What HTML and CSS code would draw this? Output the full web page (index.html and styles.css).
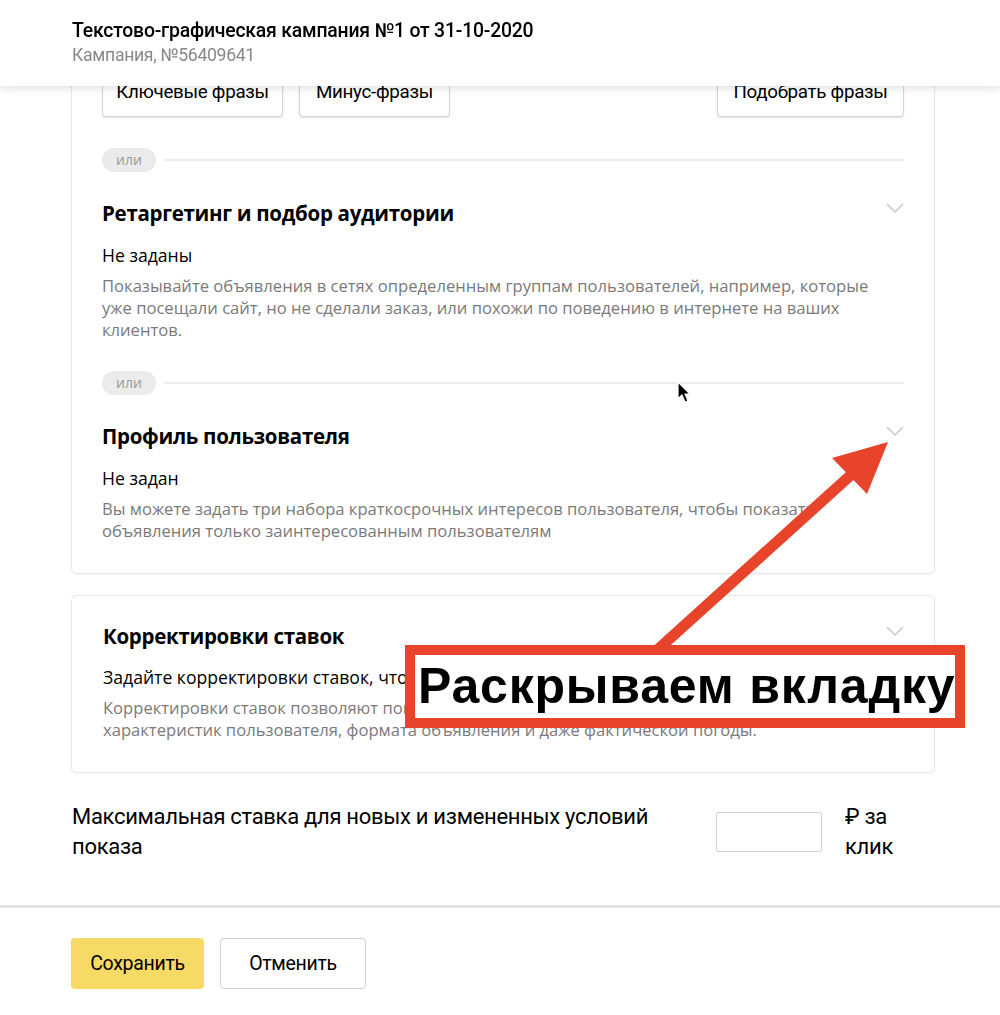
FILE: index.html
```html
<!DOCTYPE html>
<html lang="ru">
<head>
<meta charset="utf-8">
<title>Кампания</title>
<link rel="stylesheet" href="styles.css">
</head>
<body>
<header class="topbar">
  <div class="topbar-title">Текстово-графическая кампания №1 от 31-10-2020</div>
  <div class="topbar-sub">Кампания, №56409641</div>
</header>

<main class="page">
  <section class="card card-first">
    <div class="btn-row">
      <button class="btn">Ключевые фразы</button>
      <button class="btn">Минус-фразы</button>
      <span class="spacer"></span>
      <button class="btn">Подобрать фразы</button>
    </div>

    <div class="or-row"><span class="or-pill">или</span><span class="or-line"></span></div>

    <div class="sec-head">
      <h2 class="sec-title">Ретаргетинг и подбор аудитории</h2>
      <svg class="chev" width="18" height="10" viewBox="0 0 18 10"><path d="M1 1 L9 9 L17 1" fill="none" stroke="#c9c9c9" stroke-width="1.5"/></svg>
    </div>
    <div class="sec-value">Не заданы</div>
    <p class="sec-desc narrow">Показывайте объявления в сетях определенным группам пользователей, например, которые уже посещали сайт, но не сделали заказ, или похожи по поведению в интернете на ваших клиентов.</p>

    <div class="or-row"><span class="or-pill">или</span><span class="or-line"></span></div>

    <div class="sec-head">
      <h2 class="sec-title">Профиль пользователя</h2>
      <svg class="chev" width="18" height="10" viewBox="0 0 18 10"><path d="M1 1 L9 9 L17 1" fill="none" stroke="#c9c9c9" stroke-width="1.5"/></svg>
    </div>
    <div class="sec-value">Не задан</div>
    <p class="sec-desc">Вы можете задать три набора краткосрочных интересов пользователя, чтобы показать объявления только заинтересованным пользователям</p>
  </section>

  <section class="card card-second">
    <div class="sec-head">
      <h2 class="sec-title">Корректировки ставок</h2>
      <svg class="chev" width="18" height="10" viewBox="0 0 18 10"><path d="M1 1 L9 9 L17 1" fill="none" stroke="#c9c9c9" stroke-width="1.5"/></svg>
    </div>
    <div class="sec-value tight">Задайте корректировки ставок, чтобы повысить эффективность рекламы</div>
    <p class="sec-desc">Корректировки ставок позволяют повышать или понижать ставки в зависимости от<br>характеристик пользователя, формата объявления и даже фактической погоды.</p>
  </section>

  <div class="bid-row">
    <div class="bid-label">Максимальная ставка для новых и измененных условий показа</div>
    <input class="bid-input" type="text">
    <div class="bid-unit">₽ за клик</div>
  </div>
</main>

<footer class="footer">
  <button class="btn-save">Сохранить</button>
  <button class="btn-cancel">Отменить</button>
</footer>

<svg class="anno-arrow" width="1000" height="1015" viewBox="0 0 1000 1015">
  <line x1="655" y1="652" x2="852" y2="474" stroke="#e8432b" stroke-width="11"/>
  <polygon points="888,442 832,458 867,494" fill="#e8432b"/>
</svg>
<div class="anno-box">Раскрываем вкладку</div>

<svg class="cursor" width="16" height="24" viewBox="0 0 16 24">
  <path d="M1 1 L1 18 L5 14 L8 21 L11 20 L8 13 L13 13 Z" fill="#000" stroke="#fff" stroke-width="1.2" stroke-linejoin="round"/>
</svg>
</body>
</html>
```

FILE: styles.css
```css
* { box-sizing: border-box; }
html, body { margin: 0; padding: 0; background: #fff; }
body {
  font-family: "Open Sans", "Noto Sans", sans-serif;
  color: #000;
  width: 1000px;
  height: 1015px;
  overflow: hidden;
  position: relative;
}

.topbar {
  position: fixed;
  top: 0; left: 0; right: 0;
  height: 86px;
  background: #fff;
  box-shadow: 0 2px 8px rgba(0,0,0,0.13);
  padding: 19px 0 0 72px;
  z-index: 5;
  font-family: Roboto, "Liberation Sans", sans-serif;
}
.topbar-title {
  font-size: 19.4px;
  font-weight: 500;
  line-height: 24px;
  letter-spacing: -0.2px;
}
.topbar-sub {
  font-size: 17.6px;
  line-height: 22px;
  color: #888;
  margin-top: 1px;
  letter-spacing: -0.3px;
}

.page {
  padding: 39px 65px 0 71px;
}

.card {
  border: 1px solid #e6e6e6;
  border-radius: 6px;
  box-shadow: 0 1px 2px rgba(0,0,0,0.04);
  padding: 0 30px;
  background: #fff;
}
.card-first { padding-top: 27px; padding-bottom: 31px; }
.card-second { margin-top: 21px; padding-top: 27px; padding-bottom: 31px; padding-left: 31px; }

.btn-row { display: flex; gap: 16px; }
.spacer { flex: 1; }
.btn {
  height: 50px;
  padding: 0 10px;
  border: 1px solid #d5d5d5;
  border-radius: 4px;
  background: #fff;
  box-shadow: 0 1px 2px rgba(0,0,0,0.12);
  font-family: Roboto, "Liberation Sans", sans-serif;
  font-size: 18.8px;
  color: #000;
  letter-spacing: -0.3px;
}
.btn:nth-child(1) { width: 181px; }
.btn:nth-child(2) { width: 151px; }
.btn:nth-child(4) { width: 187px; }

.or-row {
  display: flex;
  align-items: center;
  gap: 8px;
  margin-top: 31px;
}
.card-first .or-row + .sec-head { margin-top: 28px; }
.or-pill {
  background: #ebebeb;
  color: #999;
  font-size: 14px;
  line-height: 24px;
  height: 24px;
  padding: 0 14px;
  border-radius: 12px;
}
.or-line { flex: 1; height: 2px; background: #ececec; }
.sec-desc + .or-row { margin-top: 30px; }

.sec-head {
  display: flex;
  justify-content: space-between;
  align-items: flex-start;
}
.sec-title {
  margin: 0;
  font-size: 20.5px;
  font-weight: 700;
  line-height: 26px;
  letter-spacing: -0.3px;
}
.chev { margin-top: 3px; }

.sec-value {
  margin-top: 18px;
  font-size: 17.6px;
  line-height: 22px;
}
.sec-value.tight { margin-top: 17px; }
.sec-desc {
  margin: 9px 0 0;
  font-size: 16.6px;
  line-height: 22px;
  color: #7a7a7a;
}
.sec-desc.narrow { padding-right: 24px; }

.bid-row {
  display: flex;
  align-items: flex-start;
  margin-top: 29px;
  margin-left: 1px;
  font-family: Roboto, "Liberation Sans", sans-serif;
  font-size: 22px;
  line-height: 30px;
  letter-spacing: -0.3px;
}
.bid-label { width: 600px; }
.bid-input {
  margin-left: 44px;
  margin-top: 10px;
  width: 106px;
  height: 40px;
  border: 1px solid #cfcfcf;
  border-radius: 2px;
}
.bid-unit { margin-left: 23px; width: 50px; }

.footer {
  position: absolute;
  left: 0; right: 0;
  top: 905px;
  border-top: 3px solid #e3e3e3;
  padding: 30px 0 0 71px;
  display: flex;
  gap: 16px;
}
.btn-save, .btn-cancel {
  height: 51px;
  border-radius: 4px;
  font-family: Roboto, "Liberation Sans", sans-serif;
  font-size: 19.5px;
  color: #000;
  letter-spacing: -0.3px;
}
.btn-save {
  width: 133px;
  background: #f7d966;
  border: none;
}
.btn-cancel {
  width: 146px;
  background: #fff;
  border: 1px solid #d0d0d0;
}

.anno-arrow {
  position: absolute;
  left: 0; top: 0;
  z-index: 10;
}
.anno-box {
  position: absolute;
  left: 405px; top: 645px;
  width: 560px; height: 83px;
  border: 10px solid #e8432b;
  background: #fff;
  z-index: 11;
  font-family: "Liberation Sans", Arial, sans-serif;
  font-weight: 700;
  font-size: 50px;
  line-height: 63px;
  padding-left: 3px;
  white-space: nowrap;
  letter-spacing: 0.8px;
}
.cursor {
  position: absolute;
  left: 677px; top: 381px;
  z-index: 12;
}
```
